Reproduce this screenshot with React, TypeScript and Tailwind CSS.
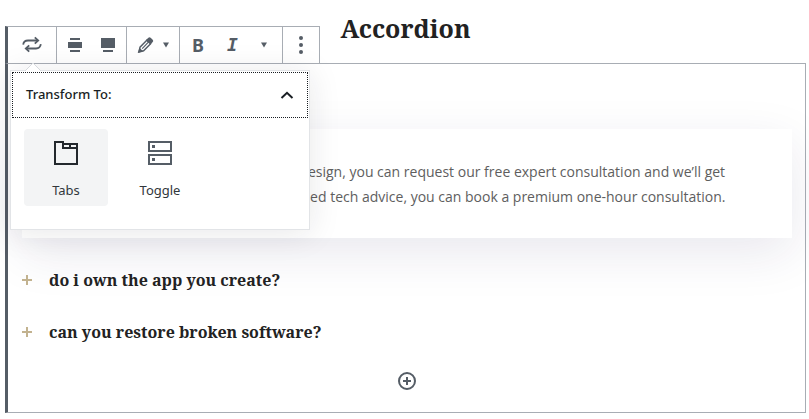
import { ReactNode } from 'react';

const questions = ['do i own the app you create?', 'can you restore broken software?'];

function ToolGroup({ children, className }: { children: ReactNode; className: string }) {
  return (
    <div className={`flex h-full items-center border-r border-[#a8adb4] ${className}`}>{children}</div>
  );
}

function Caret() {
  return (
    <svg width="6" height="6" viewBox="0 0 6 6" fill="currentColor">
      <path d="M0 0.5h6L3 5.5z" />
    </svg>
  );
}

function Toolbar() {
  return (
    <div
      role="toolbar"
      className="absolute bottom-full -left-[3px] flex h-[38px] border-y border-l-[3px] border-y-[#a8adb4] border-l-[#555d66] bg-white text-[#555d66]"
    >
      <ToolGroup className="w-[49px] justify-center">
        <button aria-label="Change block type">
          <svg width="20" height="20" viewBox="0 0 20 20" fill="none" stroke="currentColor" strokeWidth="1.8">
            <path d="M1.2 9.6C1.6 6.4 3.6 5.5 6 5.5h9.5" />
            <path d="M12.8 2.3L16.2 5.5l-3.4 3.2" />
            <path d="M18.8 9.2c-.4 3.2-2.4 4.3-4.8 4.3H4.5" />
            <path d="M7.2 10.3L3.8 13.5l3.4 3.2" />
          </svg>
        </button>
      </ToolGroup>

      <ToolGroup className="w-[70px] justify-center gap-[18px]">
        <button aria-label="Align middle">
          <svg width="15" height="14" viewBox="0 0 15 14" fill="currentColor">
            <path d="M2 0h10v2H2zM0 4h14v6H0zM2 12h10v2H2z" />
          </svg>
        </button>
        <button aria-label="Align top">
          <svg width="15" height="14" viewBox="0 0 15 14" fill="currentColor">
            <path d="M0 0h14v10H0zM2 12h10v2H2z" />
          </svg>
        </button>
      </ToolGroup>

      <ToolGroup className="w-[53px] justify-center gap-2">
        <button aria-label="Edit style">
          <svg width="18" height="18" viewBox="0 0 18 18" fill="none" stroke="currentColor" strokeWidth="1.4">
            <path d="M9.8 4.2l3.8 3.6-7 7L2 16l1-4.8z" />
            <path d="M9.8 4.2l2-2c.5-.4 1-.3 1.4 0l2 2c.4.4.4.9 0 1.3l-1.8 2z" fill="currentColor" />
            <path d="M11.4 6.2l-6.2 6.4" strokeWidth="1.2" />
            <path d="M2.8 13l2 2-3 1z" fill="currentColor" />
          </svg>
        </button>
        <button aria-label="More styles">
          <Caret />
        </button>
      </ToolGroup>

      <ToolGroup className="w-[103px] justify-between pr-[15px] pl-3">
        <button aria-label="Bold" className="font-['Noto_Sans',sans-serif] text-lg leading-5 font-bold">
          B
        </button>
        <button
          aria-label="Italic"
          className="font-['DejaVu_Sans_Mono',monospace] text-lg leading-5 font-bold italic"
        >
          I
        </button>
        <button aria-label="More text controls">
          <Caret />
        </button>
      </ToolGroup>

      <ToolGroup className="w-[37px] justify-center">
        <button aria-label="More options">
          <svg width="4" height="18" viewBox="0 0 4 18" fill="currentColor">
            <circle cx="2" cy="2" r="2" />
            <circle cx="2" cy="9" r="2" />
            <circle cx="2" cy="16" r="2" />
          </svg>
        </button>
      </ToolGroup>
    </div>
  );
}

function TransformMenu() {
  return (
    <div className="absolute top-1.5 left-0.5 z-10 w-[300px] border border-[#e2e4e7] bg-white pb-[23px] font-['Noto_Sans',sans-serif] text-[13px] shadow-[0_3px_30px_rgba(25,30,35,0.1)]">
      <svg className="absolute -top-2 left-3.5" width="16" height="9" viewBox="0 0 16 9">
        <path d="M0 8l8-8 8 8v1H0z" fill="#fff" />
        <path d="M0 8l8-8 8 8" fill="none" stroke="#d7dade" />
      </svg>
      <button
        aria-expanded="true"
        className="relative m-px flex h-[46px] w-[296px] items-center justify-between border border-dotted border-[#191e23] px-[13px] font-medium text-[#191e23]"
      >
        Transform To:
        <svg width="14" height="8" viewBox="0 0 14 8" fill="none" stroke="currentColor" strokeWidth="2">
          <path d="M1.5 7L7 1.8 12.5 7" />
        </svg>
      </button>
      <div className="flex gap-2.5 px-[13px] pt-2.5">
        <button className="flex h-[77px] w-[84px] flex-col items-center rounded bg-[#f3f4f5] pt-3 text-[#32373c]">
          <svg width="24" height="24" viewBox="0 0 24 24" fill="none" stroke="#23282d" strokeWidth="2">
            <path d="M1 1h8v6h14v16H1z" />
            <path d="M9 3h14v5M16 3v4" />
          </svg>
          <span className="mt-[15px] leading-5">Tabs</span>
        </button>
        <button className="flex h-[77px] w-[84px] flex-col items-center rounded pt-3 text-[#32373c]">
          <svg width="24" height="24" viewBox="0 0 24 24" fill="none" stroke="#555d66" strokeWidth="2">
            <path d="M1 1h22v9H1zM1 14h22v9H1z" />
            <path d="M4 4h3v3H4zM4 17h3v3H4z" fill="#555d66" stroke="none" />
          </svg>
          <span className="mt-[15px] leading-5">Toggle</span>
        </button>
      </div>
    </div>
  );
}

export default function App() {
  return (
    <main className="bg-white pr-[3px] pb-1.5 pl-[5px]">
      <h1 className="h-[63px] pt-2.5 text-center font-['Noto_Serif',serif] text-[25px] leading-9 font-bold text-[#222]">
        Accordion
      </h1>

      <section className="relative border border-l-[3px] border-[#a8adb4] border-l-[#555d66] pr-[13px] pb-[22px] pl-3.5">
        <Toolbar />
        <TransformMenu />

        <div className="mt-[65px] bg-white pt-[30px] pr-10 pb-[29px] pl-[244px] font-['Open_Sans',sans-serif] text-sm leading-[25px] text-[#5e5e5e] shadow-[0_15px_50px_rgba(40,30,90,0.1)]">
          <p className="whitespace-nowrap">
            your design, you can request our free expert consultation and we’ll get
            <br />
            you need tech advice, you can book a premium one-hour consultation.
          </p>
        </div>

        <div className="relative mt-4">
          {questions.map((question) => (
            <h2 key={question}>
              <button className="flex h-[52px] w-full items-center gap-[17px] text-left font-['Noto_Serif',serif] text-base font-bold text-[#222]">
                <svg width="10" height="10" viewBox="0 0 10 10" fill="#c2b28f">
                  <path d="M4 0h2v4h4v2H6v4H4V6H0V4h4z" />
                </svg>
                {question}
              </button>
            </h2>
          ))}
        </div>

        <div className="mt-3.5 flex justify-center">
          <button aria-label="Add block" className="text-[#555d66]">
            <svg width="18" height="18" viewBox="0 0 18 18" fill="none" stroke="currentColor" strokeWidth="2">
              <circle cx="9" cy="9" r="8" />
              <path d="M9 5v8M5 9h8" />
            </svg>
          </button>
        </div>
      </section>
    </main>
  );
}
